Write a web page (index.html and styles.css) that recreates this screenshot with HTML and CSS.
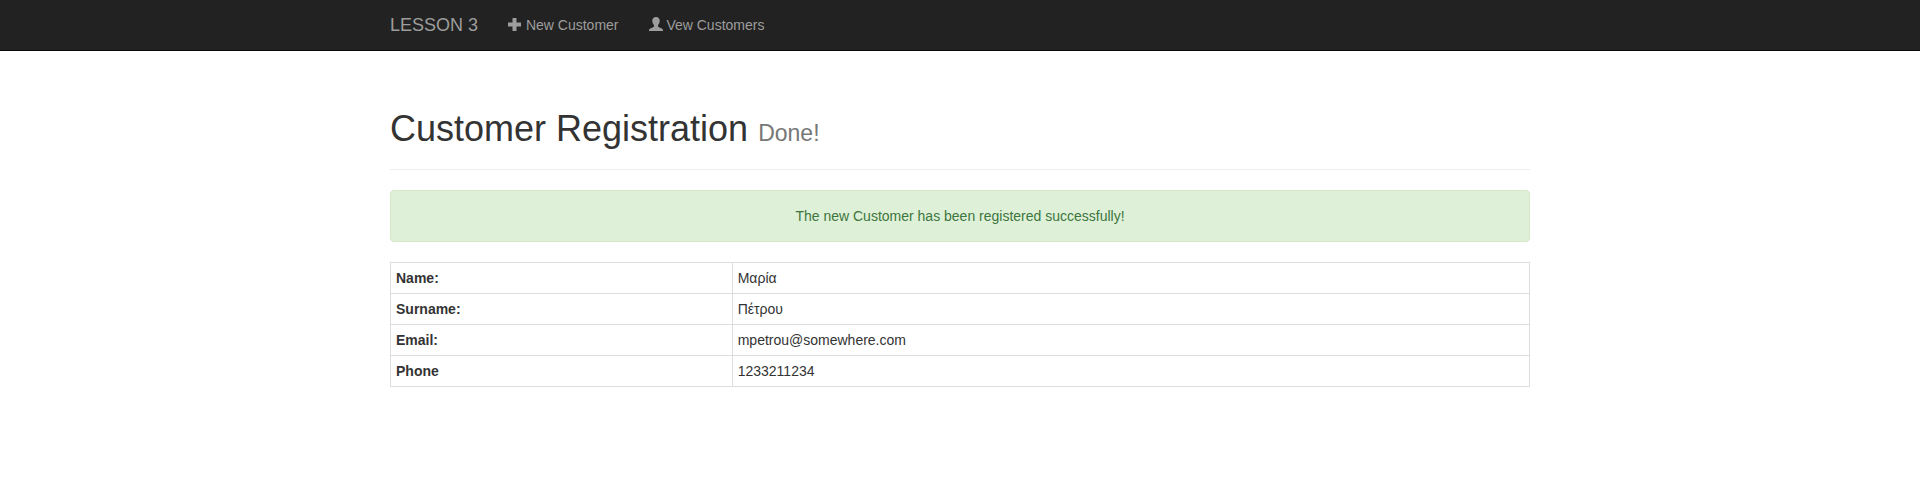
FILE: index.html
```html
<!DOCTYPE html>
<html lang="en">
<head>
<meta charset="utf-8">
<title>Customer Registration</title>
<link rel="stylesheet" href="styles.css">
</head>
<body>
<nav class="navbar">
  <div class="container navbar-inner">
    <a class="brand" href="#">LESSON 3</a>
    <ul class="nav">
      <li><a class="nav-link" href="#"><svg class="icon" viewBox="0 0 14 14" aria-hidden="true"><path d="M4.500 1.200q0-.2.200-.2h3.600q.2 0 .2.200V5.500h4.300q.2 0 .2.200v3.600q0 .2-.2.200H8.500v4.300q0 .2-.2.200H4.700q-.2 0-.2-.2V9.500H.2q-.2 0-.2-.2V5.700q0-.2.200-.2h4.300z"/></svg> New Customer</a></li>
      <li><a class="nav-link" href="#"><svg class="icon" viewBox="0 0 14 14" aria-hidden="true"><path d="M7 0c2.300 0 3.700 1.400 3.700 3.800 0 1.900-.7 3.400-1.700 4.300v1c0 .6.300.9.900 1.200l2.900 1.200c.8.400 1.200.8 1.200 1.500v1H0v-1c0-.7.400-1.100 1.200-1.500l2.900-1.200c.6-.3.900-.6.900-1.200v-1C4 7.200 3.300 5.700 3.300 3.800 3.300 1.400 4.700 0 7 0z"/></svg> Vew Customers</a></li>
    </ul>
  </div>
</nav>
<main class="container">
  <header class="page-header">
    <h1 class="title">Customer Registration <small class="subtitle">Done!</small></h1>
  </header>
  <div class="alert" role="status">The new Customer has been registered successfully!</div>
  <table class="details">
    <tbody>
      <tr><th scope="row">Name:</th><td>Μαρία</td></tr>
      <tr><th scope="row">Surname:</th><td>Πέτρου</td></tr>
      <tr><th scope="row">Email:</th><td>mpetrou@somewhere.com</td></tr>
      <tr><th scope="row">Phone</th><td>1233211234</td></tr>
    </tbody>
  </table>
</main>
</body>
</html>
```
FILE: styles.css
```css
* {
  box-sizing: border-box;
}

body {
  margin: 0;
  background: #fff;
  color: #333;
  font: 14px/20px "Liberation Sans", Arial, sans-serif;
}

.container {
  max-width: 1170px;
  margin: 0 auto;
  padding: 0 15px;
}

.navbar {
  background: #222;
  border-bottom: 1px solid #080808;
}

.navbar-inner {
  display: flex;
}

.brand,
.nav-link {
  display: block;
  padding: 15px;
  color: #9d9d9d;
  text-decoration: none;
}

.brand {
  padding-left: 0;
  font-size: 18px;
}

.nav {
  display: flex;
  margin: 0;
  padding: 0;
  list-style: none;
}

.icon {
  width: 14px;
  height: 14px;
  vertical-align: -1px;
  fill: currentColor;
}

.page-header {
  margin: 58px 0 20px;
  padding-bottom: 20px;
  border-bottom: 1px solid #eee;
}

.title {
  margin: 0;
  font-size: 36px;
  line-height: 40px;
  font-weight: 500;
}

.subtitle {
  color: #777;
  font-size: 23px;
  font-weight: 400;
  line-height: 1;
}

.alert {
  margin-bottom: 20px;
  padding: 15px;
  border: 1px solid #d6e9c6;
  border-radius: 4px;
  background: #dff0d8;
  color: #3c763d;
  text-align: center;
}

.details {
  width: 100%;
  border: 1px solid #ddd;
  border-collapse: collapse;
}

.details th,
.details td {
  padding: 5px;
  border: 1px solid #ddd;
  text-align: left;
}

.details th {
  width: 30%;
}
```
